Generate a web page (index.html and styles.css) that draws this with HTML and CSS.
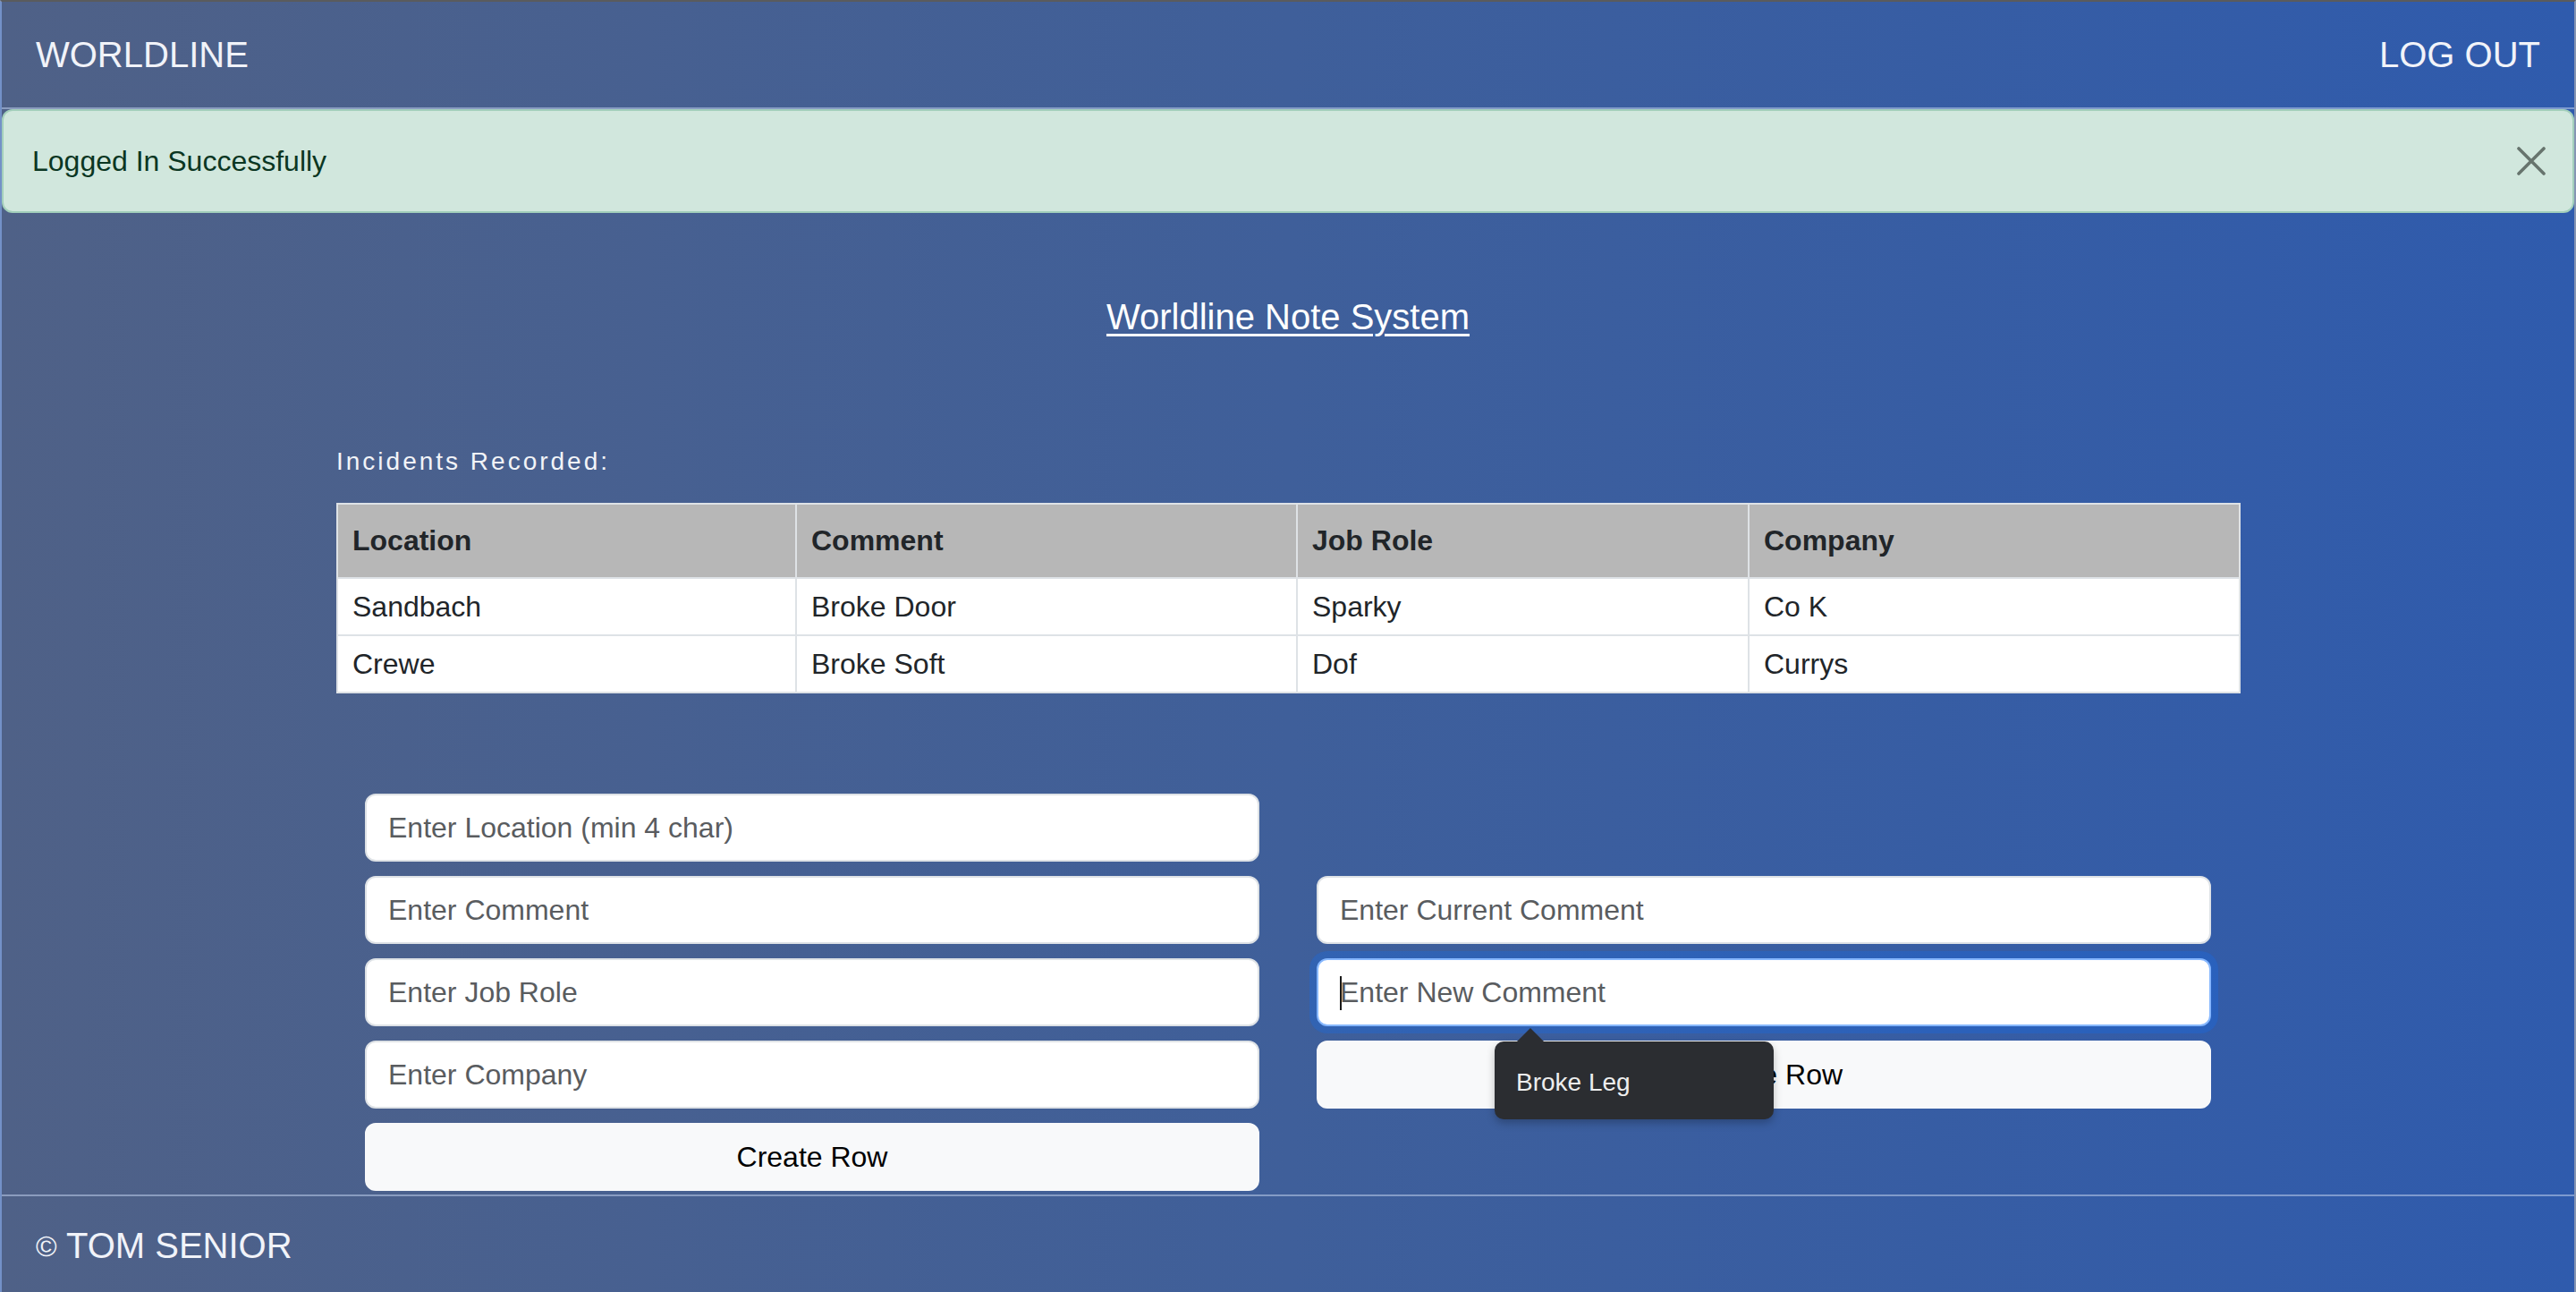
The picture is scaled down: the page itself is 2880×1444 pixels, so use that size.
FILE: index.html
```html
<!DOCTYPE html>
<html lang="en">
<head>
<meta charset="utf-8">
<title>Worldline Note System</title>
<link rel="stylesheet" href="styles.css">
</head>
<body>
<div class="page">
  <header class="navbar">
    <span class="brand">WORLDLINE</span>
    <a class="logout" href="#">LOG OUT</a>
  </header>
  <div class="alert">
    <span>Logged In Successfully</span>
    <button class="close" type="button" aria-label="Close">
      <svg viewBox="0 0 32 32" width="32" height="32"><path d="M2 2 L30 30 M30 2 L2 30" stroke="#67746d" stroke-width="3.6" stroke-linecap="round" fill="none"/></svg>
    </button>
  </div>
  <main class="main">
    <h1 class="title"><a href="#">Worldline Note System</a></h1>
    <section class="records">
      <p class="caption">Incidents Recorded:</p>
      <table class="table">
        <thead>
          <tr><th class="c1">Location</th><th class="c2">Comment</th><th class="c3">Job Role</th><th class="c4">Company</th></tr>
        </thead>
        <tbody>
          <tr><td>Sandbach</td><td>Broke Door</td><td>Sparky</td><td>Co K</td></tr>
          <tr><td>Crewe</td><td>Broke Soft</td><td>Dof</td><td>Currys</td></tr>
        </tbody>
      </table>
    </section>
    <div class="forms">
      <form class="col">
        <input class="field" type="text" placeholder="Enter Location (min 4 char)">
        <input class="field" type="text" placeholder="Enter Comment">
        <input class="field" type="text" placeholder="Enter Job Role">
        <input class="field" type="text" placeholder="Enter Company">
        <button class="btn" type="button">Create Row</button>
      </form>
      <form class="col col-right">
        <input class="field" type="text" placeholder="Enter Current Comment">
        <div class="focus-wrap">
          <input class="field field-focus" type="text" placeholder="Enter New Comment">
          <span class="caret"></span>
        </div>
        <button class="btn" type="button">Update Row</button>
        <div class="tooltip">Broke Leg</div>
      </form>
    </div>
  </main>
  <footer class="footer"><span class="copy">©</span> TOM SENIOR</footer>
</div>
</body>
</html>
```
FILE: styles.css
```css
* { box-sizing: border-box; }
html, body { margin: 0; padding: 0; }
body {
  font-family: "Liberation Sans", Arial, Helvetica, sans-serif;
  background: #4a5f8c;
  overflow: hidden;
}
.page {
  height: 1444px;
  display: flex;
  flex-direction: column;
  background: linear-gradient(90deg, #4f6187 0%, #3f5f9a 50%, #2f5bad 100%);
  border-top: 2px solid #5a5b5d;
  border-left: 2px solid rgba(200, 210, 230, 0.45);
  border-right: 2px solid rgba(200, 210, 230, 0.45);
}
.navbar {
  height: 120px;
  flex: none;
  display: flex;
  justify-content: space-between;
  align-items: center;
  padding: 0 38px;
  border-bottom: 2px solid rgba(190, 205, 235, 0.55);
  font-size: 40px;
  line-height: 118px;
  color: #f1f3f9;
}
.logout { color: #f1f3f9; text-decoration: none; }
.alert {
  position: relative;
  flex: none;
  height: 116px;
  padding: 32px 32px;
  background: #d1e7dd;
  border: 2px solid #a3cfbb;
  border-radius: 12px;
  color: #0a3622;
  font-size: 32px;
  line-height: 48px;
}
.close {
  position: absolute;
  top: 40px;
  right: 30px;
  width: 32px;
  height: 32px;
  padding: 0;
  border: 0;
  background: transparent;
}
.close svg { display: block; }
.main {
  flex: 1;
  padding-top: 92px;
}
.title {
  margin: 0;
  text-align: center;
  font-size: 40px;
  line-height: 48px;
  font-weight: normal;
}
.title a {
  color: #ffffff;
  text-decoration: underline;
  text-decoration-thickness: 3px;
  text-underline-offset: 5px;
}
.records {
  width: 2128px;
  margin: 117px auto 0;
}
.caption {
  margin: 0 0 25px;
  font-size: 28px;
  line-height: 42px;
  letter-spacing: 3px;
  color: #f2f4f8;
}
.table {
  width: 2128px;
  table-layout: fixed;
  border-collapse: collapse;
  background: #ffffff;
  color: #212529;
  font-size: 32px;
  line-height: 48px;
}
.table th, .table td {
  border: 2px solid #dee2e6;
  padding: 7px 16px;
  text-align: left;
}
.table th {
  background: #b7b7b7;
  font-weight: bold;
  padding: 16px 16px 17px;
}
.c1 { width: 513px; }
.c2 { width: 560px; }
.c3 { width: 505px; }
.c4 { width: 549px; }
.forms {
  width: 2064px;
  margin: 112px auto 0;
  display: grid;
  grid-template-columns: 1000px 1000px;
  column-gap: 64px;
  align-items: center;
}
.col {
  margin: 0;
  display: flex;
  flex-direction: column;
  gap: 16px;
}
.col-right { position: relative; }
.focus-wrap { position: relative; }
.field {
  display: block;
  height: 76px;
  width: 100%;
  padding: 0 24px;
  border: 2px solid #dee2e6;
  border-radius: 12px;
  background: #ffffff;
  font-family: "Liberation Sans", Arial, sans-serif;
  font-size: 32px;
  color: #212529;
  outline: none;
}
.field::placeholder { color: #595c5f; opacity: 1; }
.field-focus {
  border-color: #86b7fe;
  box-shadow: 0 0 0 8px rgba(13, 110, 253, 0.25);
}
.caret {
  position: absolute;
  left: 26px;
  top: 20px;
  width: 2px;
  height: 38px;
  background: #1a1a1a;
}
.btn {
  height: 76px;
  width: 100%;
  border: 2px solid #f8f9fa;
  border-radius: 12px;
  background: #f8f9fa;
  color: #000000;
  font-family: "Liberation Sans", Arial, sans-serif;
  font-size: 32px;
}
.tooltip {
  position: absolute;
  top: 185px;
  left: 199px;
  width: 312px;
  height: 87px;
  padding-left: 24px;
  padding-top: 2px;
  background: #2b2d31;
  border-radius: 10px;
  color: #eeeeee;
  font-size: 28px;
  line-height: 87px;
  box-shadow: 0 4px 10px rgba(0, 0, 0, 0.25);
}
.tooltip::before {
  content: "";
  position: absolute;
  top: -15px;
  left: 24px;
  border-left: 16px solid transparent;
  border-right: 16px solid transparent;
  border-bottom: 16px solid #2b2d31;
}
.footer {
  flex: none;
  height: 109px;
  padding: 4px 38px 0;
  border-top: 2px solid rgba(190, 205, 235, 0.55);
  font-size: 40px;
  line-height: 103px;
  color: #f1f3f9;
}
.copy {
  font-size: 32px;
  vertical-align: 2px;
}
```
